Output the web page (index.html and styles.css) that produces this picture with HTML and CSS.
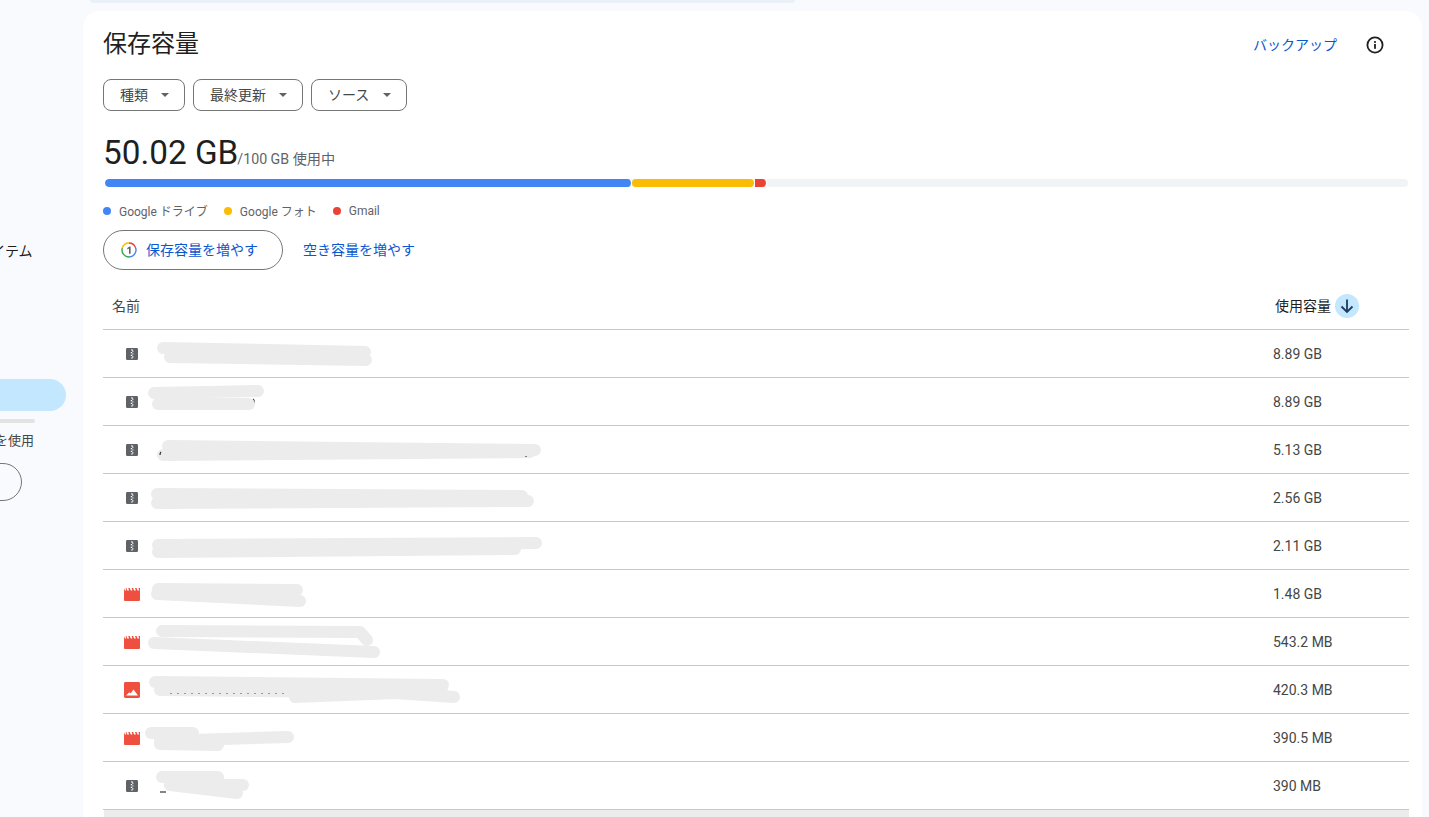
FILE: index.html
```html
<!DOCTYPE html>
<html lang="ja">
<head>
<meta charset="utf-8">
<title>保存容量</title>
<link rel="stylesheet" href="styles.css">
</head>
<body>
<div class="page">
  <aside class="sidebar">
    <nav class="nav">
      <div class="nav-item">マイドライブ</div>
      <div class="nav-item">パソコン</div>
      <div class="nav-item">共有アイテム</div>
      <div class="nav-item">最近使用したアイテム</div>
      <div class="nav-item">スター付き</div>
      <div class="nav-item nav-gap">スパム</div>
      <div class="nav-item">ゴミ箱</div>
      <div class="nav-item nav-active">保存容量</div>
    </nav>
    <div class="side-meter"></div>
    <div class="side-text">100 GB 中 50.02 GB を使用</div>
    <div class="side-button">保存容量を増やす</div>
  </aside>
  <main class="main">
    <div class="search-edge"></div>
    <section class="card">
      <header class="card-head">
        <h1 class="title">保存容量</h1>
        <div class="head-actions">
          <a class="link">バックアップ</a>
          <svg class="info" viewBox="0 0 20 20" width="20" height="20"><circle cx="10" cy="10" r="7.6" fill="none" stroke="#1f1f1f" stroke-width="1.8"/><rect x="9.1" y="9" width="1.8" height="4.8" fill="#1f1f1f"/><rect x="9.1" y="6.1" width="1.8" height="1.8" fill="#1f1f1f"/></svg>
        </div>
      </header>
      <div class="filters">
        <button class="filter filter-a"><span class="lift">種類</span><i class="caret"></i></button>
        <button class="filter filter-b"><span class="lift">最終更新</span><i class="caret"></i></button>
        <button class="filter filter-c"><span class="lift">ソース</span><i class="caret"></i></button>
      </div>
      <div class="usage"><span class="usage-big">50.02 GB</span><span class="usage-small">/100 GB 使用中</span></div>
      <div class="meter">
        <div class="seg seg-blue"></div>
        <div class="seg seg-yellow"></div>
        <div class="seg seg-red"></div>
      </div>
      <div class="legend">
        <span class="legend-item"><i class="dot dot-blue"></i>Google ドライブ</span>
        <span class="legend-item"><i class="dot dot-yellow"></i>Google フォト</span>
        <span class="legend-item"><i class="dot dot-red"></i>Gmail</span>
      </div>
      <div class="actions">
        <button class="pill">
          <svg viewBox="0 0 16 16" width="16" height="16"><path d="M8 1a7 7 0 0 1 6.3 4" fill="none" stroke="#ea4335" stroke-width="1.4"/><path d="M14.3 5A7 7 0 0 1 8 15" fill="none" stroke="#4285f4" stroke-width="1.4"/><path d="M8 15A7 7 0 0 1 1.3 6" fill="none" stroke="#34a853" stroke-width="1.4"/><path d="M1.3 6A7 7 0 0 1 8 1" fill="none" stroke="#fbbc04" stroke-width="1.4"/><path d="M6.3 6l2.2-1.6H9.6v7.4H8V6.4l-1.7 1z" fill="#5f6368"/></svg>
          <span class="lift">保存容量を増やす</span>
        </button>
        <a class="link lift">空き容量を増やす</a>
      </div>
      <div class="table">
        <div class="thead">
          <span class="th-name lift">名前</span>
          <span class="th-size"><span class="lift">使用容量</span><span class="sort"><svg viewBox="0 0 24 24" width="24" height="24"><path d="M12 5.5v12.5M6.5 12.5l5.5 5.5 5.5-5.5" fill="none" stroke="#1f3a5f" stroke-width="1.8"/></svg></span></span>
        </div>

        <div class="row">
          <svg class="ic" viewBox="0 0 16 16" width="16" height="16"><use href="#zip"/></svg>
          <svg class="redact" width="420" height="48"><polyline points="13,18 215,22"/><polyline points="20,27 216,30"/></svg>
          <span class="size">8.89 GB</span>
        </div>
        <div class="row">
          <svg class="ic" viewBox="0 0 16 16" width="16" height="16"><use href="#zip"/></svg>
          <svg class="redact" width="420" height="48"><path class="mark" d="M103 21q2 2 1 5"/><polyline points="4,15 108,13"/><polyline points="8,26 99,26"/></svg>
          <span class="size">8.89 GB</span>
        </div>
        <div class="row">
          <svg class="ic" viewBox="0 0 16 16" width="16" height="16"><use href="#zip"/></svg>
          <svg class="redact" width="420" height="48"><polyline points="18,20 385,24"/><polyline points="13,29 380,26"/><path class="mark" d="M11 26q-1 1-1 3"/><path class="mark" d="M376 30v1"/></svg>
          <span class="size">5.13 GB</span>
        </div>
        <div class="row">
          <svg class="ic" viewBox="0 0 16 16" width="16" height="16"><use href="#zip"/></svg>
          <svg class="redact" width="420" height="48"><polyline points="7,20 372,22"/><polyline points="7,29 378,27"/></svg>
          <span class="size">2.56 GB</span>
        </div>
        <div class="row">
          <svg class="ic" viewBox="0 0 16 16" width="16" height="16"><use href="#zip"/></svg>
          <svg class="redact" width="420" height="48"><polyline points="8,23 386,21"/><polyline points="8,30 365,27"/></svg>
          <span class="size">2.11 GB</span>
        </div>
        <div class="row">
          <svg class="ic" viewBox="0 0 16 16" width="16" height="16"><use href="#video"/></svg>
          <svg class="redact" width="420" height="48"><polyline points="8,19 147,20"/><polyline points="7,24 150,31"/></svg>
          <span class="size">1.48 GB</span>
        </div>
        <div class="row">
          <svg class="ic" viewBox="0 0 16 16" width="16" height="16"><use href="#video"/></svg>
          <svg class="redact" width="420" height="48"><polyline points="12,13 210,14 217,22"/><polyline points="4,25 224,34"/></svg>
          <span class="size">543.2 MB</span>
        </div>
        <div class="row">
          <svg class="ic" viewBox="0 0 16 16" width="16" height="16"><use href="#image"/></svg>
          <svg class="redact" width="420" height="48"><polyline points="5,16 293,19"/><polyline points="10,24 293,27"/><polyline points="145,31 245,27 304,31"/><line class="trace" x1="20" y1="27.5" x2="138" y2="27.5"/></svg>
          <span class="size">420.3 MB</span>
        </div>
        <div class="row">
          <svg class="ic" viewBox="0 0 16 16" width="16" height="16"><use href="#video"/></svg>
          <svg class="redact" width="420" height="48"><polyline points="1,19 43,19"/><polyline points="10,27 138,23"/><polyline points="10,30 68,31"/></svg>
          <span class="size">390.5 MB</span>
        </div>
        <div class="row">
          <svg class="ic" viewBox="0 0 16 16" width="16" height="16"><use href="#zip"/></svg>
          <svg class="redact" width="420" height="48"><path class="mark" d="M10 30h6"/><polyline points="12,15 68,15"/><polyline points="20,23 93,23"/><polyline points="20,23 87,31"/></svg>
          <span class="size">390 MB</span>
        </div>
        <div class="row-next"></div>
      </div>
    </section>
  </main>
</div>
<svg class="defs" width="0" height="0">
  <symbol id="zip" viewBox="0 0 16 16"><rect x="2" y="2" width="12" height="12" rx="1.2" fill="#5f6368"/><path d="M7.2 3.2h1.4v1.2H7.2zM8.2 4.6h1.2v1.2H8.2zM6.8 6h1.4v1.2H6.8zM8.2 7.4h1.2v1.2H8.2zM6.8 8.8h1.4V10H6.8zM8.2 10.2h1.2v1.2H8.2zM7.2 11.6h1.4v1H7.2z" fill="#fff"/></symbol>
  <symbol id="video" viewBox="0 0 16 16"><path d="M0 2.2V14a1 1 0 0 0 1 1h14a1 1 0 0 0 1-1V2h-1.6l.9 2.4h-1.8L12.600 2H11l.9 2.4h-1.800L9.200 2H7.600l.9 2.400H6.700L5.800 2H4.200l.9 2.400H3.300L2.400 2H1.600l.7 2.400H.9z" fill="#ef4f3e"/></symbol>
  <symbol id="image" viewBox="0 0 16 16"><rect x="0" y="0" width="16" height="16" rx="1.4" fill="#ef4f3e"/><path d="M2 13.500l3.300-3.200 1.500 1 2.700-3.800 4.500 6z" fill="#fff"/></symbol>
</svg>
</body>
</html>
```
FILE: styles.css
```css
* { box-sizing: border-box; }
html, body { margin: 0; height: 100%; overflow: hidden; }
body {
  background: #f8fafe;
  color: #1f1f1f;
  font-family: Roboto, "Noto Sans CJK JP", sans-serif;
  font-size: 14px;
}
.defs { position: absolute; }
.page { display: flex; height: 817px; }
.lift { display: block; padding-bottom: 2px; }

.sidebar {
  width: 83px;
  flex: none;
  display: flex;
  flex-direction: column;
  align-items: flex-end;
  padding-top: 140px;
  overflow: hidden;
}
.nav { display: flex; flex-direction: column; flex: none; width: 172px; margin-right: 17px; }
.nav-item {
  height: 32px;
  line-height: 30px;
  white-space: nowrap;
  border-radius: 16px;
  color: #1f1f1f;
}
.nav-gap { margin-top: 15px; }
.nav-active { background: #c2e7ff; }
.side-meter {
  flex: none;
  width: 150px;
  height: 4px;
  margin: 8px 48px 0 0;
  background: #e3e3e3;
  border-radius: 2px;
}
.side-text {
  flex: none;
  margin: 8px 49px 0 0;
  line-height: 20px;
  font-size: 13px;
  white-space: nowrap;
  color: #444746;
}
.side-button {
  flex: none;
  width: 150px;
  height: 38px;
  margin: 12px 61px 0 0;
  border: 1px solid #747775;
  border-radius: 19px;
  color: transparent;
  overflow: hidden;
}

.main { flex: 1; min-width: 0; display: flex; flex-direction: column; padding-right: 7px; }
.search-edge {
  flex: none;
  width: 705px;
  height: 3px;
  margin-left: 7px;
  background: #eaf0f7;
  border-radius: 0 0 10px 10px;
}
.card {
  flex: 1;
  margin-top: 8px;
  background: #fff;
  border-radius: 16px 16px 0 0;
  padding: 0 13px 0 20px;
  overflow: hidden;
}
.card-head { display: flex; justify-content: space-between; align-items: center; height: 68px; }
.title { margin: 0; font-size: 24px; font-weight: 400; line-height: 32px; color: #1f1f1f; padding-bottom: 2px; }
.head-actions { display: flex; align-items: center; gap: 28px; padding-right: 24px; }
.head-actions .link { padding-bottom: 2px; }
.info { display: block; }
.link { color: #0b57d0; white-space: nowrap; }

.filters { display: flex; gap: 8px; }
.filter {
  display: flex;
  align-items: center;
  justify-content: space-between;
  height: 32px;
  padding: 0 15px 0 16px;
  border: 1px solid #747775;
  border-radius: 8px;
  background: #fff;
  font: inherit;
  color: #444746;
}
.filter-a { width: 82px; }
.filter-b { width: 110px; }
.filter-c { width: 96px; }
.caret {
  width: 0; height: 0;
  border-left: 4px solid transparent;
  border-right: 4px solid transparent;
  border-top: 4px solid #5f6368;
}

.usage { display: flex; align-items: baseline; margin-top: 18px; height: 48px; line-height: 48px; }
.usage-big { font-size: 33.3px; font-weight: 400; color: #1f1f1f; }
.usage-small { font-size: 14.2px; color: #5f6368; margin-left: -1px; }
.meter {
  display: flex;
  height: 8px;
  margin: 2px 1px 0 2px;
  background: #f1f3f4;
  border-radius: 4px;
  overflow: hidden;
}
.seg { height: 8px; border-radius: 4px; border-right: 1px solid #fff; background-clip: padding-box; }
.seg-blue { width: 527px; background-color: #4285f4; }
.seg-yellow { width: 123px; background-color: #fbbc04; }
.seg-red { width: 12px; background-color: #ea4335; border-radius: 0 5px 5px 0; }

.legend { display: flex; gap: 16px; margin-top: 16px; height: 15px; align-items: center; font-size: 12px; color: #5f6368; }
.legend-item { display: flex; align-items: center; gap: 8px; }
.dot { width: 8px; height: 8px; border-radius: 50%; }
.dot-blue { background: #4285f4; }
.dot-yellow { background: #fbbc04; }
.dot-red { background: #ea4335; }

.actions { display: flex; align-items: center; gap: 20px; margin-top: 12px; height: 40px; }
.pill {
  display: flex;
  align-items: center;
  gap: 9px;
  width: 180px;
  height: 40px;
  padding: 0 0 0 17px;
  border: 1px solid #747775;
  border-radius: 20px;
  background: #fff;
  font: inherit;
  color: #0b57d0;
}

.table { margin-top: 12px; width: 1306px; }
.thead {
  display: flex;
  justify-content: space-between;
  align-items: center;
  height: 48px;
  padding: 0 50px 0 9px;
  border-bottom: 1px solid #c7c7c7;
  color: #444746;
}
.th-size { display: flex; align-items: center; gap: 4px; color: #1f1f1f; }
.sort { width: 24px; height: 24px; border-radius: 50%; background: #c2e7ff; }
.sort svg { display: block; }
.row {
  display: flex;
  align-items: center;
  height: 48px;
  padding-left: 21px;
  border-bottom: 1px solid #c7c7c7;
}
.ic { flex: none; display: block; }
.redact { flex: none; overflow: visible; margin-left: 10px; align-self: flex-start; }
.redact polyline { fill: none; stroke: #ececec; stroke-width: 12; stroke-linecap: round; stroke-linejoin: round; }
.redact .trace { stroke: #999; stroke-width: 1; stroke-dasharray: 2 5; }
.redact .mark { fill: none; stroke: #333; stroke-width: 1.2; }
.size { margin-left: auto; width: 136px; color: #444746; }
.row-next { height: 20px; background: #ececec; margin-left: 1px; }
```
